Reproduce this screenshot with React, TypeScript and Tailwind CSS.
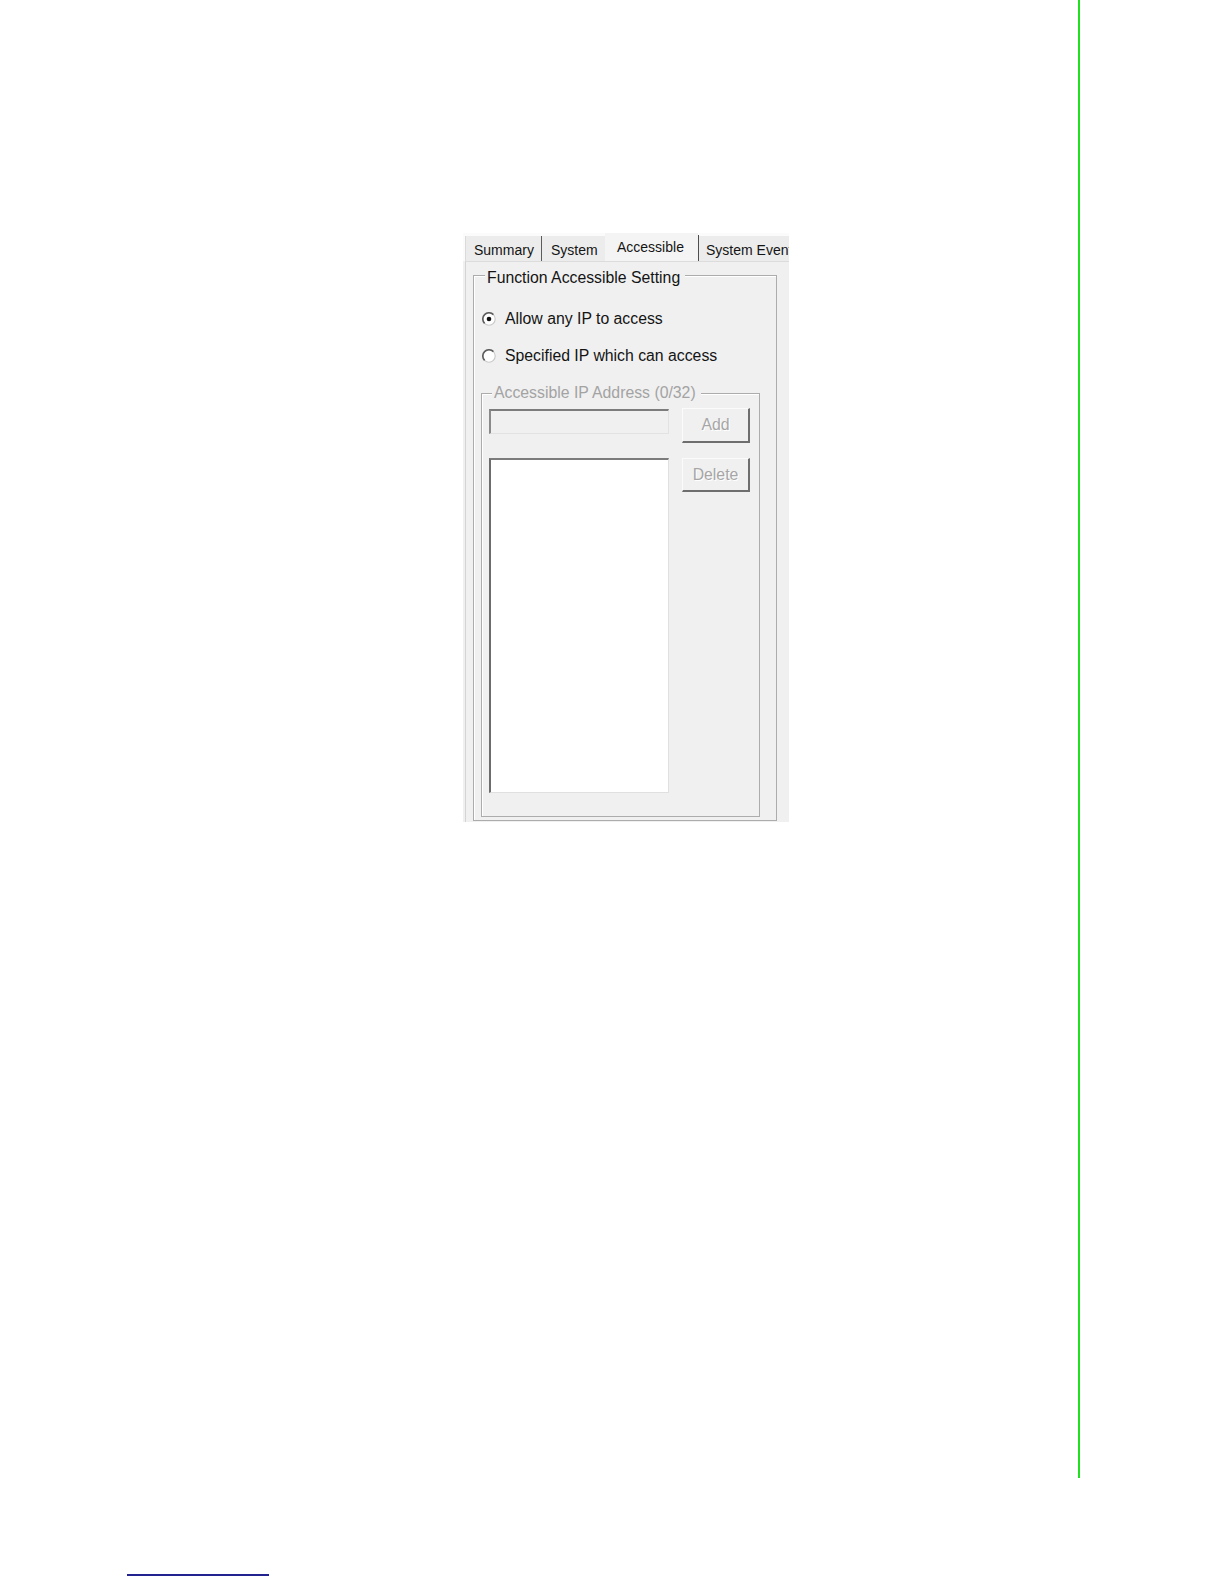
import React from "react";

const FONT = { fontFamily: '"Liberation Sans", Arial, sans-serif' };

function Radio({ checked }: { checked?: boolean }) {
  return (
    <svg width="14" height="14" viewBox="0 0 14 14" className="shrink-0">
      <circle cx="7" cy="7" r="6.2" fill="#ffffff" stroke="#c8c8c8" strokeWidth="1.1" />
      <path d="M2.6 11.4 A6.2 6.2 0 0 1 11.4 2.6" stroke="#5e5e5e" strokeWidth="1.6" fill="none" />
      {checked && <circle cx="7" cy="7" r="2.3" fill="#111111" />}
    </svg>
  );
}

function Button({ label, h }: { label: string; h: string }) {
  return (
    <div
      className={`w-[68px] ${h} bg-[#f0f0f0] border-t border-l border-t-[#fbfbfb] border-l-[#fbfbfb] border-b-2 border-r-2 border-b-[#6e6e6e] border-r-[#6e6e6e] flex items-center justify-center text-[15.8px] leading-[18px] text-[#a6a6a6] [text-shadow:1px_1px_0_#ffffff]`}
    >
      {label}
    </div>
  );
}

export default function App() {
  return (
    <div className="w-[1224px] h-[1584px] bg-white flex flex-col" style={FONT}>
      <div className="w-[1080px] h-[1478px] border-r-2 border-[#1fe11f] pt-[233px] pl-[463px]">
        {/* dialog crop */}
        <div className="w-[326px] h-[589px] bg-[#f0f0f0] flex flex-col overflow-hidden">
          {/* tab strip */}
          <div className="h-[28px] bg-[#fbfbfb] flex items-end text-[14px] leading-[16px] text-[#141414] whitespace-nowrap">
            <div className="w-[2px] h-[25px] bg-[#fbfbfb]" />
            <div className="h-[25px] w-[76px] bg-[#ececec] border-l border-l-[#dadada] pl-[8px] pt-[6px]">
              Summary
            </div>
            <div className="w-[1px] h-[25px] bg-[#5c5c5c]" />
            <div className="h-[25px] w-[63px] bg-[#ececec] pl-[9px] pt-[6px]">System</div>
            <div className="h-[28px] w-[93px] bg-[#f4f4f4] pl-[12px] pt-[6px]">Accessible</div>
            <div className="w-[1px] h-[26px] bg-[#4e4e4e]" />
            <div className="h-[25px] flex-1 bg-[#ececec] pl-[7px] pt-[6px] overflow-hidden">
              System Events
            </div>
          </div>
          {/* tab page */}
          <div className="flex-1 ml-[2px] border-t border-l border-t-[#dcdcdc] border-l-[#d4d4d4] pl-[7px] pt-[13px]">
            {/* outer group box */}
            <div className="relative w-[304px] h-[546px] border border-[#acacac] shadow-[inset_1px_1px_0_#ffffff] flex flex-col">
              <span className="absolute left-[11px] top-[-7px] pl-[2px] pr-[5px] bg-[#f0f0f0] text-[15.8px] leading-[18px] text-[#141414] whitespace-nowrap">
                Function Accessible Setting
              </span>
              <div className="mt-[34px] ml-[8px] h-[18px] flex items-center">
                <Radio checked />
                <span className="ml-[9px] text-[15.8px] leading-[18px] text-[#141414] whitespace-nowrap">
                  Allow any IP to access
                </span>
              </div>
              <div className="mt-[19px] ml-[8px] h-[18px] flex items-center">
                <Radio />
                <span className="ml-[9px] text-[15.8px] leading-[18px] text-[#141414] whitespace-nowrap">
                  Specified IP which can access
                </span>
              </div>
              {/* inner group box */}
              <div className="relative mt-[28px] ml-[7px] w-[279px] h-[424px] border border-[#acacac] shadow-[inset_1px_1px_0_#ffffff] flex pt-[14px] pl-[7px]">
                <span className="absolute left-[10px] top-[-10px] pl-[2px] pr-[5px] bg-[#f0f0f0] text-[15.8px] leading-[18px] text-[#a3a3a3] whitespace-nowrap">
                  Accessible IP Address (0/32)
                </span>
                <div className="flex flex-col mt-[1px]">
                  <div className="w-[180px] h-[25px] bg-[#f0f0f0] border-t-2 border-l-2 border-t-[#7c7c7c] border-l-[#8a8a8a] border-b border-r border-b-[#e2e2e2] border-r-[#e2e2e2]" />
                  <div className="mt-[24px] w-[180px] h-[335px] bg-white border-t-2 border-l-2 border-t-[#7c7c7c] border-l-[#6c6c6c] border-b border-r border-b-[#e0e0e0] border-r-[#e0e0e0]" />
                </div>
                <div className="flex flex-col ml-[13px]">
                  <Button label="Add" h="h-[35px]" />
                  <div className="mt-[15px]">
                    <Button label="Delete" h="h-[34px]" />
                  </div>
                </div>
              </div>
            </div>
          </div>
        </div>
      </div>
      <div className="ml-[127px] mt-[96px] w-[142px] h-[2px] bg-[#23238f]" />
    </div>
  );
}
